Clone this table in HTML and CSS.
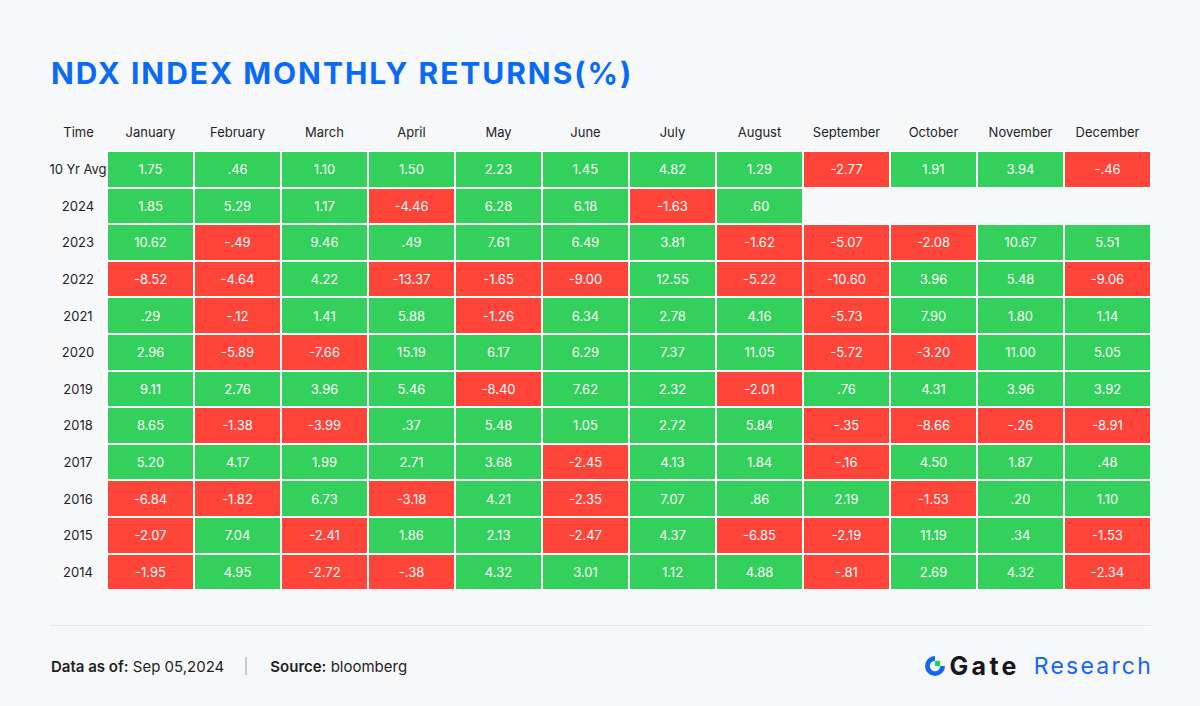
FILE: index.html
```html
<!DOCTYPE html>
<html lang="en">
<head>
<meta charset="utf-8">
<title>NDX Index Monthly Returns</title>
<link rel="stylesheet" href="styles.css">
</head>
<body>
<div class="page">
  <h1 class="title">NDX INDEX MONTHLY RETURNS(%)</h1>
  <div class="grid">
    <div class="hd">Time</div><div class="hd">January</div><div class="hd">February</div><div class="hd">March</div><div class="hd">April</div><div class="hd">May</div><div class="hd">June</div><div class="hd">July</div><div class="hd">August</div><div class="hd">September</div><div class="hd">October</div><div class="hd">November</div><div class="hd">December</div>

    <div class="lb">10 Yr Avg</div><div class="c g">1.75</div><div class="c g">.46</div><div class="c g">1.10</div><div class="c g">1.50</div><div class="c g">2.23</div><div class="c g">1.45</div><div class="c g">4.82</div><div class="c g">1.29</div><div class="c r">-2.77</div><div class="c g">1.91</div><div class="c g">3.94</div><div class="c r">-.46</div>

    <div class="lb">2024</div><div class="c g">1.85</div><div class="c g">5.29</div><div class="c g">1.17</div><div class="c r">-4.46</div><div class="c g">6.28</div><div class="c g">6.18</div><div class="c r">-1.63</div><div class="c g">.60</div><div class="e"></div><div class="e"></div><div class="e"></div><div class="e"></div>

    <div class="lb">2023</div><div class="c g">10.62</div><div class="c r">-.49</div><div class="c g">9.46</div><div class="c g">.49</div><div class="c g">7.61</div><div class="c g">6.49</div><div class="c g">3.81</div><div class="c r">-1.62</div><div class="c r">-5.07</div><div class="c r">-2.08</div><div class="c g">10.67</div><div class="c g">5.51</div>

    <div class="lb">2022</div><div class="c r">-8.52</div><div class="c r">-4.64</div><div class="c g">4.22</div><div class="c r">-13.37</div><div class="c r">-1.65</div><div class="c r">-9.00</div><div class="c g">12.55</div><div class="c r">-5.22</div><div class="c r">-10.60</div><div class="c g">3.96</div><div class="c g">5.48</div><div class="c r">-9.06</div>

    <div class="lb">2021</div><div class="c g">.29</div><div class="c r">-.12</div><div class="c g">1.41</div><div class="c g">5.88</div><div class="c r">-1.26</div><div class="c g">6.34</div><div class="c g">2.78</div><div class="c g">4.16</div><div class="c r">-5.73</div><div class="c g">7.90</div><div class="c g">1.80</div><div class="c g">1.14</div>

    <div class="lb">2020</div><div class="c g">2.96</div><div class="c r">-5.89</div><div class="c r">-7.66</div><div class="c g">15.19</div><div class="c g">6.17</div><div class="c g">6.29</div><div class="c g">7.37</div><div class="c g">11.05</div><div class="c r">-5.72</div><div class="c r">-3.20</div><div class="c g">11.00</div><div class="c g">5.05</div>

    <div class="lb">2019</div><div class="c g">9.11</div><div class="c g">2.76</div><div class="c g">3.96</div><div class="c g">5.46</div><div class="c r">-8.40</div><div class="c g">7.62</div><div class="c g">2.32</div><div class="c r">-2.01</div><div class="c g">.76</div><div class="c g">4.31</div><div class="c g">3.96</div><div class="c g">3.92</div>

    <div class="lb">2018</div><div class="c g">8.65</div><div class="c r">-1.38</div><div class="c r">-3.99</div><div class="c g">.37</div><div class="c g">5.48</div><div class="c g">1.05</div><div class="c g">2.72</div><div class="c g">5.84</div><div class="c r">-.35</div><div class="c r">-8.66</div><div class="c r">-.26</div><div class="c r">-8.91</div>

    <div class="lb">2017</div><div class="c g">5.20</div><div class="c g">4.17</div><div class="c g">1.99</div><div class="c g">2.71</div><div class="c g">3.68</div><div class="c r">-2.45</div><div class="c g">4.13</div><div class="c g">1.84</div><div class="c r">-.16</div><div class="c g">4.50</div><div class="c g">1.87</div><div class="c g">.48</div>

    <div class="lb">2016</div><div class="c r">-6.84</div><div class="c r">-1.82</div><div class="c g">6.73</div><div class="c r">-3.18</div><div class="c g">4.21</div><div class="c r">-2.35</div><div class="c g">7.07</div><div class="c g">.86</div><div class="c g">2.19</div><div class="c r">-1.53</div><div class="c g">.20</div><div class="c g">1.10</div>

    <div class="lb">2015</div><div class="c r">-2.07</div><div class="c g">7.04</div><div class="c r">-2.41</div><div class="c g">1.86</div><div class="c g">2.13</div><div class="c r">-2.47</div><div class="c g">4.37</div><div class="c r">-6.85</div><div class="c r">-2.19</div><div class="c g">11.19</div><div class="c g">.34</div><div class="c r">-1.53</div>

    <div class="lb">2014</div><div class="c r">-1.95</div><div class="c g">4.95</div><div class="c r">-2.72</div><div class="c r">-.38</div><div class="c g">4.32</div><div class="c g">3.01</div><div class="c g">1.12</div><div class="c g">4.88</div><div class="c r">-.81</div><div class="c g">2.69</div><div class="c g">4.32</div><div class="c r">-2.34</div>
  </div>

  <div class="footer">
    <div class="meta">
      <span><b>Data as of:</b> Sep 05,2024</span>
      <span class="sep"></span>
      <span><b>Source:</b> bloomberg</span>
    </div>
    <div class="brand">
      <svg class="logo" viewBox="0 0 24 24" width="20" height="20" aria-hidden="true">
        <path d="M12 0 A12 12 0 1 0 24 12 L18.2 12 A6.2 6.2 0 1 1 12 5.8 Z" fill="#1665f5"/>
        <rect x="12" y="5.8" width="6.2" height="6.2" fill="#17d36b"/>
      </svg>
      <span class="gate">Gate</span>
      <span class="research">Research</span>
    </div>
  </div>
</div>
</body>
</html>
```

FILE: styles.css
```css
* { box-sizing: border-box; }
html, body {
  margin: 0;
  padding: 0;
}
body {
  width: 1200px;
  height: 706px;
  background: #f7f8fa;
  font-family: Inter, "Noto Sans", "Liberation Sans", sans-serif;
  color: #222326;
  overflow: hidden;
}
.page {
  padding: 52px 49px 0 50px;
}
.title {
  margin: 0 0 0 1px;
  font-size: 30px;
  line-height: 42px;
  font-weight: 700;
  color: #0b6af3;
  letter-spacing: 1.95px;
}
.grid {
  margin-top: 19px;
  display: grid;
  grid-template-columns: 57px repeat(12, 87px);
  grid-template-rows: 38px repeat(12, 36.6px);
}
.hd, .lb {
  display: flex;
  align-items: center;
  justify-content: center;
  font-size: 13px;
  color: #222326;
  white-space: nowrap;
}
.lb { padding-right: 1px; }
.hd { padding-bottom: 1px; }
.c {
  display: flex;
  align-items: center;
  justify-content: center;
  border: 1px solid #ffffff;
  color: #ffffff;
  font-size: 13px;
}
.g { background: #33d15b; }
.r { background: #ff443a; }
.footer {
  margin-top: 35px;
  border-top: 1px solid #e3e5e9;
  height: 79px;
  display: flex;
  align-items: center;
  justify-content: space-between;
  padding-top: 2px;
}
.meta {
  display: flex;
  align-items: center;
  font-size: 15px;
  color: #1e1f22;
  margin-left: 1px;
}
.meta b { font-weight: 600; }
.sep {
  width: 2px;
  height: 18px;
  background: #c8cacf;
  margin: 0 23px 0 21px;
}
.brand {
  display: flex;
  align-items: center;
}
.logo { display: block; margin-right: 5px; }
.gate {
  font-size: 25px;
  font-weight: 700;
  color: #16171b;
  letter-spacing: 3.3px;
  margin-right: 14px;
}
.research {
  font-size: 23px;
  font-weight: 400;
  color: #1665f5;
  letter-spacing: 2.2px;
  margin-right: -2px;
}
```
